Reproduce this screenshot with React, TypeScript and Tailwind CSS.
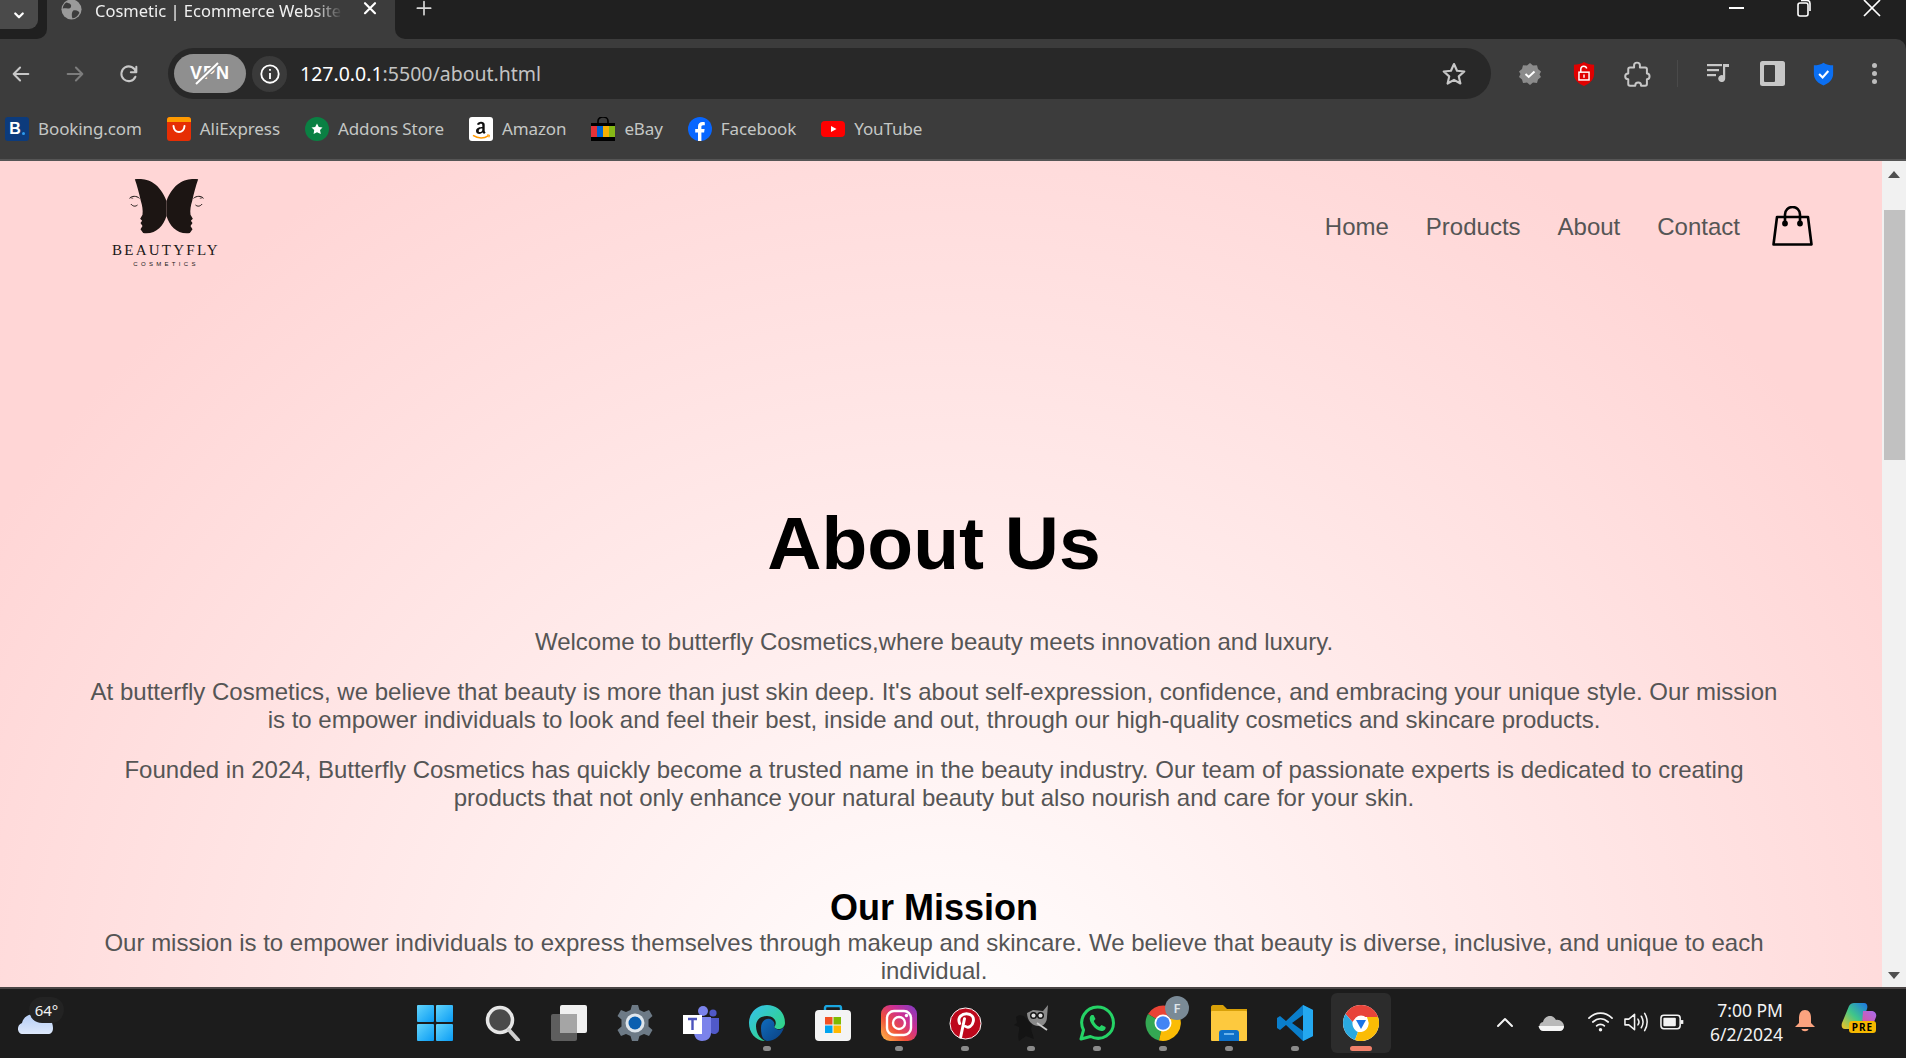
import React from "react";

const ui = "font-['Noto_Sans','Open_Sans',sans-serif]";

function Butterfly() {
  const half = (
    <>
      <path d="M133 40 C165 36 205 45 228 105 L228 150 C218 182 195 206 158 201 L150 190 L156 180 L150 171 L155 164 L149 158 L156 146 C158 132 155 118 151 105 C146 82 140 60 133 40 Z" fill="#1c1513" />
      <path d="M117 97 C124 89 138 89 147 97" stroke="#1c1513" strokeWidth="3" fill="none" />
      <path d="M119 95 L128 97" stroke="#1c1513" strokeWidth="2" fill="none" />
      <path d="M121 114 C128 122 135 122 141 117" stroke="#1c1513" strokeWidth="3" fill="none" />
    </>
  );
  return (
    <svg viewBox="110 30 236 180" className="w-[79px] h-[60px]">
      {half}
      <g transform="translate(456 0) scale(-1 1)">{half}</g>
    </svg>
  );
}

function Bag() {
  return (
    <svg viewBox="0 0 41 40" className="w-[41px] h-[40px]" fill="none" stroke="#000" strokeWidth="2.6" strokeLinejoin="round">
      <path d="M5 11 H36 L39.5 38.5 H1.5 Z" />
      <path d="M13 17 V8.5 a7.5 7.5 0 0 1 15 0 V17" />
      <circle cx="13" cy="17.5" r="1.6" fill="#000" />
      <circle cx="28" cy="17.5" r="1.6" fill="#000" />
    </svg>
  );
}

function Booking() {
  return (
    <div className="w-6 h-6 rounded-[3px] bg-[#0c3b7c] flex items-center justify-center gap-[1px]">
      <span className="text-white font-bold text-[16px] leading-none font-['Liberation_Sans',sans-serif]">B</span>
      <span className="w-[3px] h-[3px] rounded-full bg-[#2d9cf0] mt-[9px]" />
    </div>
  );
}
function Ali() {
  return (
    <svg viewBox="0 0 24 24" className="w-6 h-6">
      <rect width="24" height="24" rx="3" fill="#e62e04" />
      <path d="M0 3 a3 3 0 0 1 3 -3 H21 a3 3 0 0 1 3 3 V5 H0 Z" fill="#ff9a00" />
      <path d="M6.5 9 C7 17 17 17 17.5 9" stroke="#fff" strokeWidth="2" fill="none" strokeLinecap="round" />
    </svg>
  );
}
function Addons() {
  return (
    <svg viewBox="0 0 24 24" className="w-6 h-6">
      <circle cx="12" cy="12" r="12" fill="#0a8043" />
      <path d="M12 6.5 L13.8 10 L17.5 10.4 L15 13 L15.8 17 L12 15.2 L8.6 17 L9.2 13 L6.5 10.4 L10.2 10 Z" fill="#fff" />
    </svg>
  );
}
function Amazon() {
  return (
    <svg viewBox="0 0 24 24" className="w-6 h-6">
      <rect width="24" height="24" rx="3" fill="#fff" />
      <path d="M8 7.5 C8.5 4 15.5 3.6 15.7 7.5 V13.5 C15.7 14.6 16.2 15 16.7 15.5 L15 17 L13.6 15.6 C11 18 7 17 7 14 C7 10.5 11 10 13.3 10 V8 C13.3 6.2 10.6 6.2 10.2 8 Z M13.3 11.6 C11.5 11.6 9.7 12.2 9.7 13.9 C9.7 15.6 12.6 15.6 13.3 13.2 Z" fill="#111" />
      <path d="M4 18.4 C9 21.6 15 21.6 19.6 18.6" stroke="#f90" strokeWidth="1.5" fill="none" />
      <path d="M18 18 L20.4 18 L20 20.4" stroke="#f90" strokeWidth="1" fill="none" />
    </svg>
  );
}
function Ebay() {
  return (
    <svg viewBox="0 0 24 24" className="w-6 h-6">
      <path d="M7 7 V4 a5 4 0 0 1 10 0 V7" stroke="#000" strokeWidth="1.6" fill="none" />
      <rect x="0" y="6" width="24" height="18" fill="#000" />
      <rect x="0" y="9" width="6" height="11" fill="#e53238" />
      <rect x="6" y="9" width="6" height="11" fill="#0064d2" />
      <rect x="12" y="9" width="6" height="11" fill="#f5af02" />
      <rect x="18" y="9" width="6" height="11" fill="#86b817" />
    </svg>
  );
}
function Facebook() {
  return (
    <svg viewBox="0 0 24 24" className="w-6 h-6">
      <circle cx="12" cy="12" r="12" fill="#0866ff" />
      <path d="M10 24 V15.5 H7.2 V12 H10 V9.5 C10 6.5 11.8 5 14.4 5 C15.6 5 16.6 5.2 16.8 5.2 V8.2 H15.1 C13.7 8.2 13.4 9 13.4 10 V12 H16.6 L16.1 15.5 H13.4 V24 Z" fill="#fff" />
    </svg>
  );
}
function Youtube() {
  return (
    <svg viewBox="0 0 24 24" className="w-6 h-6">
      <rect x="0" y="4" width="24" height="16" rx="4" fill="#f00" />
      <path d="M10 9 L15.5 12 L10 15 Z" fill="#fff" />
    </svg>
  );
}

const bookmarks: [React.ReactNode, string][] = [
  [<Booking />, "Booking.com"],
  [<Ali />, "AliExpress"],
  [<Addons />, "Addons Store"],
  [<Amazon />, "Amazon"],
  [<Ebay />, "eBay"],
  [<Facebook />, "Facebook"],
  [<Youtube />, "YouTube"],
];

function Stroke({ w = 24, d, color = "#c7c7c7", sw = 2, fill = "none" }: { w?: number; d: string; color?: string; sw?: number; fill?: string }) {
  return (
    <svg viewBox="0 0 24 24" style={{ width: w, height: w }} fill={fill} stroke={color} strokeWidth={sw} strokeLinecap="round" strokeLinejoin="round">
      <path d={d} />
    </svg>
  );
}

function TabStrip() {
  return (
    <div className="h-[39px] bg-[#3c3c3c] flex items-start shrink-0 overflow-hidden text-white">
      <div className="w-[47px] h-[39px] bg-[#202020] rounded-br-[10px]">
        <div className="w-[38px] h-[29px] bg-[#4a4a4a] rounded-br-[9px] flex items-center justify-center">
          <Stroke w={18} d="M7 10 L12 15 L17 10" color="#fff" sw={3} />
        </div>
      </div>
      <div className="w-[348px] h-[39px] flex items-start pl-[14px]">
        <svg viewBox="0 0 24 24" className="w-[21px] h-[21px] -mt-[1px] shrink-0">
          <circle cx="12" cy="12" r="11.5" fill="#9a9a9a" />
          <path d="M6 4 C10 5 13 6 11 10 C8 12 5 10 2 11 C2 8 4 5 6 4 Z M14 13 C18 12 21 14 21 16 C19 20 16 22 13 22 C12 19 12 15 14 13 Z" fill="#3c3c3c" />
        </svg>
        <span className={`${ui} ml-[13px] text-[16.5px] leading-[22px] w-[248px] overflow-hidden whitespace-nowrap text-[#f0f0f0] [mask-image:linear-gradient(90deg,#000_88%,transparent_100%)]`}>
          Cosmetic | Ecommerce Website
        </span>
        <div className="ml-[17px] -mt-[1px]">
          <Stroke w={20} d="M6 5 L18 17 M18 5 L6 17" color="#fff" sw={2.6} />
        </div>
      </div>
      <div className="flex-1 h-[39px] bg-[#202020] rounded-bl-[10px] flex items-start pl-[19px] pr-[24px]">
        <div className="-mt-[1px]">
          <Stroke w={20} d="M12 3 V19 M4 11 H20" color="#d8d8d8" sw={2} />
        </div>
        <div className="ml-auto flex items-start -mt-[2px]">
          <svg viewBox="0 0 20 20" className="w-5 h-5"><path d="M3 10 H18" stroke="#fff" strokeWidth="2" /></svg>
          <svg viewBox="0 0 20 20" className="w-5 h-5 ml-[48px]" fill="none" stroke="#fff" strokeWidth="1.6"><rect x="4" y="5" width="10" height="13" rx="2" /><path d="M7 2.5 H13 a3 3 0 0 1 3 3 V13" /></svg>
          <svg viewBox="0 0 20 20" className="w-5 h-5 ml-[48px]" fill="none" stroke="#fff" strokeWidth="1.7"><path d="M2 2 L18 18 M18 2 L2 18" /></svg>
        </div>
      </div>
    </div>
  );
}

function Toolbar() {
  return (
    <div className="h-[69px] flex items-center shrink-0">
      <div className="ml-[10px]"><Stroke w={22} d="M20 12 H4 M11 5 L4 12 L11 19" color="#c7c7c7" sw={2.2} /></div>
      <div className="ml-[32px]"><Stroke w={22} d="M4 12 H20 M13 5 L20 12 L13 19" color="#7d7d7d" sw={2.2} /></div>
      <div className="ml-[32px]"><Stroke w={22} d="M19.5 10 A8 8 0 1 0 19 15 M20 4 V10 H14" color="#c7c7c7" sw={2.2} /></div>
      <div className="ml-[28px] w-[1323px] h-[51px] rounded-full bg-[#282828] flex items-center pl-[6px]">
        <div className="w-[72px] h-[39px] rounded-full bg-[#8f8f8f] relative flex items-center justify-center">
          <span className="font-['Liberation_Sans',sans-serif] font-bold text-[18px] text-white tracking-[1px]">VPN</span>
          <svg viewBox="0 0 40 24" className="absolute left-[16px] top-[8px] w-[40px] h-[24px]">
            <path d="M6 22 L28 1" stroke="#8f8f8f" strokeWidth="5" />
            <path d="M6 22 L28 1" stroke="#fff" strokeWidth="2" />
          </svg>
        </div>
        <div className="ml-[6px] w-[35px] h-[36px] rounded-full bg-[#3a3a3a] flex items-center justify-center">
          <svg viewBox="0 0 24 24" className="w-[22px] h-[22px]" fill="none" stroke="#fff" strokeWidth="2"><circle cx="12" cy="12" r="9.5" /><path d="M12 11 V17.5 M12 6.5 V8.5" /></svg>
        </div>
        <span className={`${ui} ml-[13px] text-[19.5px] text-[#c3c3c3]`}><span className="text-white">127.0.0.1</span>:5500/about.html</span>
        <div className="ml-auto mr-[24px]">
          <Stroke w={26} d="M12 2.8 L14.8 9 L21.5 9.7 L16.4 14.2 L17.9 20.8 L12 17.4 L6.1 20.8 L7.6 14.2 L2.5 9.7 L9.2 9 Z" color="#c7c7c7" sw={2} />
        </div>
      </div>
      <svg viewBox="0 0 24 24" className="w-6 h-6 ml-[27px]">
        <path d="M12 1 L15 3.5 L19 3.3 L20 7 L23 9.5 L21.5 12.5 L23 15 L20 17.5 L19 21 L15 20.5 L12 23 L9 20.5 L5 21 L4 17.5 L1 15 L2.5 12 L1 9.5 L4 7 L5 3.3 L9 3.5 Z" fill="#8b8b8b" />
        <path d="M7.5 12 L10.7 15 L16.5 9.5" stroke="#fff" strokeWidth="2" fill="none" />
      </svg>
      <svg viewBox="0 0 24 26" className="w-[22px] h-[24px] ml-[31px]">
        <path d="M12 0 C15 2 19 3 23 3 V13 C23 19 18 24 12 26 C6 24 1 19 1 13 V3 C5 3 9 2 12 0 Z" fill="#e00000" />
        <rect x="6.5" y="11" width="11" height="8.5" fill="none" stroke="#fff" strokeWidth="1.6" />
        <path d="M8.5 11 V7.5 a3.3 3.3 0 0 1 6.5 -0.5" stroke="#fff" strokeWidth="1.6" fill="none" />
        <path d="M12 13.5 V17" stroke="#fff" strokeWidth="1.6" />
      </svg>
      <div className="ml-[28px]">
        <Stroke w={28} d="M9.5 4.5 C9.5 1.5 14.5 1.5 14.5 4.5 V6.5 H19 C20 6.5 20.5 7 20.5 8 V11.5 C23.5 11.5 23.5 16.5 20.5 16.5 V20.5 C20.5 21.5 20 22 19 22 H15.5 C15.5 18.5 10.5 18.5 10.5 22 H6 C5 22 4.5 21.5 4.5 20.5 V16.5 C1 16.5 1 11.5 4.5 11.5 V8 C4.5 7 5 6.5 6 6.5 H9.5 Z" color="#c7c7c7" sw={1.7} />
      </div>
      <div className="ml-[26px] w-[1px] h-[27px] bg-[#4a4a4a]" />
      <svg viewBox="0 0 24 20" className="w-6 h-[20px] ml-[28px] -mt-[3px]" fill="#c7c7c7">
        <rect x="1" y="2" width="15" height="2.2" />
        <rect x="1" y="7" width="12" height="2.2" />
        <rect x="1" y="12" width="9" height="2.2" />
        <path d="M17 2 H23 V5 H19.2 V16.5 A3.5 3.5 0 1 1 17 13.3 Z" />
      </svg>
      <svg viewBox="0 0 25 25" className="w-[25px] h-[25px] ml-[30px]">
        <rect x="0" y="0" width="25" height="25" rx="2.5" fill="#c7c7c7" />
        <rect x="4" y="4" width="11" height="17" rx="1" fill="#3c3c3c" />
      </svg>
      <svg viewBox="0 0 24 26" className="w-[21px] h-[24px] ml-[28px]">
        <path d="M12 0 C15 2 19 3 23 3 V13 C23 19 18 24 12 26 C6 24 1 19 1 13 V3 C5 3 9 2 12 0 Z" fill="#0b6ff2" />
        <path d="M7 13 L11 17 L17.5 9.5" stroke="#fff" strokeWidth="2.4" fill="none" />
      </svg>
      <div className="ml-[38px] flex flex-col gap-[3px]">
        <span className="w-[5px] h-[5px] rounded-full bg-[#bdbdbd]" />
        <span className="w-[5px] h-[5px] rounded-full bg-[#bdbdbd]" />
        <span className="w-[5px] h-[5px] rounded-full bg-[#bdbdbd]" />
      </div>
    </div>
  );
}

function Bookmarks() {
  return (
    <div className="h-[51px] flex items-start gap-[25px] pl-[5px] pt-[9px] shrink-0">
      {bookmarks.map(([icon, label]) => (
        <div key={label} className="flex items-center gap-[9px] h-[24px]">
          {icon}
          <span className={`${ui} text-[17px] text-[#c4c7c5] whitespace-nowrap tracking-[-0.1px]`}>{label}</span>
        </div>
      ))}
    </div>
  );
}

function Page() {
  return (
    <main className="flex-1 overflow-hidden bg-[radial-gradient(ellipse_1100px_1050px_at_941px_900px,#ffffff_0%,#ffd6d6_100%)]">
      <div className="w-[1868px] font-['Liberation_Sans',Arial,sans-serif]">
        <nav className="flex items-start justify-between pl-[109px] pr-[55px]">
          <div className="pt-[15px] w-[114px] flex flex-col items-center">
            <Butterfly />
            <div className="mt-[6px] font-['Liberation_Serif',serif] text-[15px] leading-[17px] tracking-[2.25px] text-[#201816] whitespace-nowrap">BEAUTYFLY</div>
            <div className="mt-[1px] font-['Liberation_Sans',sans-serif] text-[6px] leading-[8px] tracking-[3.3px] text-[#201816] whitespace-nowrap">COSMETICS</div>
          </div>
          <div className="flex items-start pt-[45px]">
            <ul className="flex gap-[37px] text-[24px] leading-[42px] text-[#555] mr-[32px]">
              <li>Home</li>
              <li>Products</li>
              <li>About</li>
              <li>Contact</li>
            </ul>
            <Bag />
          </div>
        </nav>
        <section className="px-[84px] text-center text-[24px] leading-[28px] text-[#555]">
          <h1 className="mt-[230px] text-[75px] leading-[90px] font-bold text-black">About Us</h1>
          <p className="mt-[40px]">Welcome to butterfly Cosmetics,where beauty meets innovation and luxury.</p>
          <p className="mt-[22px]">At butterfly Cosmetics, we believe that beauty is more than just skin deep. It's about self-expression, confidence, and embracing your unique style. Our mission is to empower individuals to look and feel their best, inside and out, through our high-quality cosmetics and skincare products.</p>
          <p className="mt-[22px]">Founded in 2024, Butterfly Cosmetics has quickly become a trusted name in the beauty industry. Our team of passionate experts is dedicated to creating products that not only enhance your natural beauty but also nourish and care for your skin.</p>
          <h2 className="mt-[74px] text-[36px] leading-[43px] font-bold text-black">Our Mission</h2>
          <p>Our mission is to empower individuals to express themselves through makeup and skincare. We believe that beauty is diverse, inclusive, and unique to each individual.</p>
        </section>
      </div>
    </main>
  );
}

function Scrollbar() {
  return (
    <aside className="w-[24px] bg-[#f1f1f1] flex flex-col items-center shrink-0">
      <svg viewBox="0 0 12 7" className="w-[12px] h-[7px] mt-[10px]"><path d="M6 0 L12 7 H0 Z" fill="#505050" /></svg>
      <div className="w-[21px] h-[250px] bg-[#c1c1c1] mt-[32px] ml-[1px]" />
      <svg viewBox="0 0 12 7" className="w-[12px] h-[7px] mt-auto mb-[8px]"><path d="M6 7 L12 0 H0 Z" fill="#505050" /></svg>
    </aside>
  );
}

function Cell({ children, dot, active }: { children: React.ReactNode; dot?: boolean; active?: boolean }) {
  return (
    <div className="w-[66px] h-[66px] flex flex-col items-center relative pt-[15px]">
      {active && <span className="absolute left-[3px] top-[4px] w-[60px] h-[60px] rounded-[6px] bg-[#2c2c2c]" />}
      <div className="relative w-[38px] h-[38px] flex items-center justify-center">{children}</div>
      {dot && <span className={`absolute bottom-[4px] h-[5px] rounded-full ${active ? "w-[22px] bg-[#f0806a]" : "w-[8px] bg-[#8b8b8b]"}`} />}
    </div>
  );
}

function Taskbar() {
  return (
    <div className="h-[71px] bg-[#1c1c1c] border-t-[2px] border-[#4a4545] flex items-start shrink-0 text-white relative">
      <div className="relative w-[402px] h-full shrink-0">
        <svg viewBox="0 0 36 26" className="absolute left-[17px] top-[19px] w-[36px] h-[26px]">
          <defs><linearGradient id="cl" x1="0" y1="0" x2="0" y2="1"><stop offset="0" stopColor="#b5cdf5" /><stop offset="1" stopColor="#dde8fb" /></linearGradient></defs>
          <path d="M6 26 C0 26 -1 17 5 15 C7 6 18 3 24 10 C30 8 36 12 36 20 C36 24 34 26 31 26 Z" fill="url(#cl)" />
        </svg>
        <div className={`${ui} absolute left-[29px] top-[8px] h-[26px] w-[35px] rounded-[13px] bg-[#232323] text-[15px] leading-[26px] text-center text-[#f3f3f3]`}>64°</div>
      </div>
      <div className="flex items-start">
        <Cell>
          <svg viewBox="0 0 36 36" className="w-[36px] h-[36px]">
            <defs><linearGradient id="w" x1="0" y1="0" x2="1" y2="1"><stop offset="0" stopColor="#62d4fb" /><stop offset="1" stopColor="#0a9cf5" /></linearGradient></defs>
            <rect x="0" y="0" width="17" height="17" rx="1" fill="url(#w)" /><rect x="19" y="0" width="17" height="17" rx="1" fill="url(#w)" />
            <rect x="0" y="19" width="17" height="17" rx="1" fill="url(#w)" /><rect x="19" y="19" width="17" height="17" rx="1" fill="url(#w)" />
          </svg>
        </Cell>
        <div className="w-[2px]" />
        <Cell>
          <svg viewBox="0 0 36 36" className="w-[36px] h-[36px]">
            <circle cx="15" cy="15" r="12.5" fill="#4a4a4a" stroke="#e6e6e6" strokeWidth="3.5" />
            <path d="M24 25 L33 35" stroke="#cfcfcf" strokeWidth="4" strokeLinecap="round" />
          </svg>
        </Cell>
        <Cell>
          <svg viewBox="0 0 36 36" className="w-[36px] h-[36px]">
            <rect x="0" y="9" width="26" height="27" rx="2" fill="#5e5e5e" />
            <rect x="9" y="0" width="27" height="28" rx="2" fill="#f0f0f0" />
            <rect x="9" y="9" width="17" height="19" fill="#a5a5a5" />
          </svg>
        </Cell>
        <Cell>
          <svg viewBox="0 0 36 36" className="w-[36px] h-[36px]">
            <path d="M15 0 H21 L22.5 5 L27 7 L32 5 L35.5 11 L31.5 14.5 V21.5 L35.5 25 L32 31 L27 29 L22.5 31 L21 36 H15 L13.5 31 L9 29 L4 31 L0.5 25 L4.5 21.5 V14.5 L0.5 11 L4 5 L9 7 L13.5 5 Z" fill="#6d7a86" />
            <circle cx="18" cy="18" r="9.5" fill="#dfe6ec" />
            <circle cx="18" cy="18" r="6.5" fill="#0a5fb0" />
          </svg>
        </Cell>
        <Cell>
          <svg viewBox="0 0 36 36" className="w-[36px] h-[36px]">
            <circle cx="20" cy="6" r="5" fill="#7b83eb" /><circle cx="30" cy="8" r="3.6" fill="#5059c9" />
            <path d="M25 13 H36 V24 C36 29 31 30 28 28 Z" fill="#5059c9" />
            <path d="M11 12 H28 V28 C28 33 24 36 19 36 C14 36 11 32 11 27 Z" fill="#7b83eb" />
            <rect x="0" y="10" width="19" height="19" fill="#fff" />
            <path d="M5 14 H14 M9.5 14 V25" stroke="#4b53bc" strokeWidth="2.4" />
          </svg>
        </Cell>
        <Cell dot>
          <svg viewBox="0 0 36 36" className="w-[36px] h-[36px]">
            <defs>
              <linearGradient id="e1" x1="0" y1="0" x2="1" y2="1"><stop offset="0" stopColor="#35c1f1" /><stop offset="1" stopColor="#2fd96a" /></linearGradient>
              <linearGradient id="e2" x1="0" y1="0" x2="1" y2="1"><stop offset="0" stopColor="#0f6cbd" /><stop offset="1" stopColor="#0b3f80" /></linearGradient>
            </defs>
            <path d="M18 0 C28 0 36 7 36 18 C36 24 28 26 25 22 C29 18 26 11 18 11 C9 11 5 18 8 27 C9 31 12 34 16 36 C7 36 0 28 0 18 C0 8 8 0 18 0 Z" fill="url(#e1)" />
            <path d="M12 23 C12 15 19 12 23 15 C27 18 25 22 25 22 C28 26 33 25 35 22 C33 30 26 36 18 36 C13 35 12 29 12 23 Z" fill="url(#e2)" />
          </svg>
        </Cell>
        <Cell>
          <svg viewBox="0 0 36 36" className="w-[36px] h-[36px]">
            <path d="M10 7 V3 C10 2 11 1 12 1 H24 C25 1 26 2 26 3 V7" stroke="#1aa6e0" strokeWidth="2.4" fill="none" />
            <rect x="0" y="5" width="36" height="31" rx="4" fill="#f4f4f4" />
            <rect x="10" y="12" width="7.5" height="7.5" fill="#f25022" /><rect x="18.5" y="12" width="7.5" height="7.5" fill="#7fba00" />
            <rect x="10" y="20.5" width="7.5" height="7.5" fill="#00a4ef" /><rect x="18.5" y="20.5" width="7.5" height="7.5" fill="#ffb900" />
          </svg>
        </Cell>
        <Cell dot>
          <svg viewBox="0 0 36 36" className="w-[36px] h-[36px]">
            <defs><linearGradient id="ig" x1="0" y1="1" x2="1" y2="0"><stop offset="0" stopColor="#fdc14a" /><stop offset="0.35" stopColor="#f0503a" /><stop offset="0.65" stopColor="#cc2f93" /><stop offset="1" stopColor="#7a3cc8" /></linearGradient></defs>
            <rect width="36" height="36" rx="9" fill="url(#ig)" />
            <rect x="6" y="6" width="24" height="24" rx="7" fill="none" stroke="#fff" strokeWidth="2.4" />
            <circle cx="18" cy="18" r="6" fill="none" stroke="#fff" strokeWidth="2.4" />
            <circle cx="25.5" cy="10.5" r="1.7" fill="#fff" />
          </svg>
        </Cell>
        <Cell dot>
          <svg viewBox="0 0 34 34" className="w-[33px] h-[33px]">
            <circle cx="17" cy="17" r="16" fill="#bd081c" stroke="#fff" strokeWidth="1" />
            <path d="M11 17 C8 10 14 7 18 7 C23 7 26 10 25 15 C24 20 20 22 17 20 M16 12 L12 31" stroke="#fff" strokeWidth="3" fill="none" strokeLinecap="round" />
          </svg>
        </Cell>
        <Cell dot>
          <svg viewBox="0 0 36 36" className="w-[36px] h-[36px]">
            <path d="M3 12 C8 8 13 12 15 16 C18 18 20 20 18 24 L21 34 L13 31 L6 36 C4 30 7 26 6 22 L1 20 L4 18 Z" fill="#141414" />
            <path d="M14 8 L20 5 L30 6 L35 0 L34 12 C34 18 30 22 25 21 C20 21 14 16 14 8 Z" fill="#8a8a8a" />
            <circle cx="20.5" cy="10.5" r="2.8" fill="#e4e4e4" stroke="#111" strokeWidth="1.4" />
            <circle cx="27.5" cy="10.5" r="2.8" fill="#e4e4e4" stroke="#111" strokeWidth="1.4" />
            <path d="M24 18 L34 25" stroke="#c9c9c9" strokeWidth="1.8" />
          </svg>
        </Cell>
        <Cell dot>
          <svg viewBox="0 0 36 36" className="w-[36px] h-[36px]">
            <path d="M2 34 L4.5 25 C-1 14 7 2 18.5 2 C28 2 34.5 9.5 34.5 18 C34.5 29 23 37 11.5 31.5 Z" fill="none" stroke="#25d366" strokeWidth="3" strokeLinejoin="round" />
            <path d="M12.5 10 C10 12 10 15 13 19.5 C16 24 20 26.5 23.5 26 C26 25.5 27 23.5 26.5 22 L22.5 20 L20.5 22 C18 21 15.5 18.5 14.8 16 L16.5 14 L14.5 10 Z" fill="#25d366" />
          </svg>
        </Cell>
        <Cell dot>
          <div className="relative w-[36px] h-[36px]">
            <svg viewBox="0 0 36 36" className="w-[36px] h-[36px]">
              <path d="M18 18 L3 9 A18 18 0 0 1 33.5 9 Z" fill="#ea4335" />
              <path d="M18 18 L3 9 A18 18 0 0 0 14 35.5 Z" fill="#34a853" />
              <path d="M18 18 L33.5 9 A18 18 0 0 1 14 35.5 Z" fill="#fbbc05" />
              <circle cx="18" cy="18" r="8.5" fill="#fff" />
              <circle cx="18" cy="18" r="6.8" fill="#4285f4" />
            </svg>
            <div className={`${ui} absolute -right-[8px] -top-[9px] w-[24px] h-[24px] rounded-full bg-[#7a8a96] text-[13px] leading-[24px] text-center text-[#dfe5ea] font-semibold`}>F</div>
          </div>
        </Cell>
        <Cell dot>
          <svg viewBox="0 0 36 36" className="w-[36px] h-[36px]">
            <path d="M0 2 C0 1 1 0 2 0 H12 L16 4 H36 V14 H0 Z" fill="#d8a008" />
            <rect x="0" y="6" width="36" height="30" rx="1" fill="#fdc93e" />
            <path d="M8 36 V28 C8 26 9 25 11 25 H25 C27 25 28 26 28 28 V36 Z" fill="#0e70c8" />
            <rect x="13" y="28" width="10" height="2" fill="#6cb4ec" />
          </svg>
        </Cell>
        <Cell dot>
          <svg viewBox="0 0 36 36" className="w-[36px] h-[36px]">
            <path d="M26 0 L36 5 V31 L26 36 L9 20 L3 25 L0 23 V13 L3 11 L9 16 Z M26 10 L15 18 L26 26 Z" fill="#0a7ecb" fillRule="evenodd" />
            <path d="M26 0 L36 5 V31 L26 36 Z" fill="#24a8f0" />
          </svg>
        </Cell>
        <Cell dot active>
          <svg viewBox="0 0 36 36" className="w-[36px] h-[36px]">
            <circle cx="18" cy="18" r="18" fill="#fff" />
            <path d="M18 0 A18 18 0 0 1 35 12 L18 12 C14 12 11 14 9.5 17 L2.5 9 A18 18 0 0 1 18 0 Z" fill="#e8443a" />
            <path d="M2.5 9 L9.5 17 C9 22 12 26 15 27 L12 35 A18 18 0 0 1 2.5 9 Z" fill="#2aa9e0" />
            <path d="M35 12 A18 18 0 0 1 12 35 L15 27 C22 28 27 22 25 16 L24 12 Z" fill="#fbbc05" />
            <circle cx="18" cy="18" r="7.5" fill="#fff" />
            <path d="M18 24 L13 15 H23 Z" fill="#1a73e8" />
          </svg>
        </Cell>
      </div>
      <div className="ml-auto flex items-start h-full relative">
        <div className="flex items-center h-[68px] pb-[2px] mr-[3px]">
          <Stroke w={24} d="M5 16 L12 9 L19 16" color="#f3f3f3" sw={2} />
          <svg viewBox="0 0 26 17" className="w-[26px] h-[17px] ml-[21px]">
            <path d="M6 16 C0 16 0 9 5 8 C7 1 15 0 18 6 C22 5 26 9 26 12 C26 15 24 16 22 16 Z" fill="#b9b9b9" />
            <path d="M0.5 12 L26 12 C26 15 24 17 22 17 H5 C3 17 1 15 0.5 12 Z" fill="#f5f5f5" />
          </svg>
          <svg viewBox="0 0 26 22" className="w-[25px] h-[22px] ml-[24px]" fill="none" stroke="#f3f3f3" strokeWidth="1.8" strokeLinecap="round">
            <path d="M1 7 C8 0 18 0 25 7" /><path d="M5 11 C10 6.5 16 6.5 21 11" /><path d="M9 15 C11 13 15 13 17 15" />
            <circle cx="13" cy="19" r="1.8" fill="#f3f3f3" stroke="none" />
          </svg>
          <svg viewBox="0 0 25 22" className="w-[24px] h-[22px] ml-[11px]" fill="none" stroke="#f3f3f3" strokeWidth="1.6" strokeLinecap="round" strokeLinejoin="round">
            <path d="M1 8 H5 L11 3 V19 L5 14 H1 Z" /><path d="M14.5 8 C16 10 16 12 14.5 14" /><path d="M18 5 C20.5 9 20.5 13 18 17" /><path d="M21.5 2 C25 8 25 14 21.5 20" />
          </svg>
          <svg viewBox="0 0 25 16" className="w-[24px] h-[16px] ml-[12px]" fill="none" stroke="#f3f3f3" strokeWidth="1.6">
            <rect x="1" y="1" width="20" height="14" rx="3" /><rect x="3.5" y="3.5" width="13" height="9" rx="1" fill="#f3f3f3" stroke="none" /><path d="M23 6 V10" strokeWidth="2.6" />
          </svg>
        </div>
        <div className={`${ui} mt-[9px] w-[96px] mr-[12px] text-right text-[17.5px] leading-[24px] text-[#f3f3f3]`}>
          <div>7:00 PM</div>
          <div>6/2/2024</div>
        </div>
        <svg viewBox="0 0 20 22" className="w-[20px] h-[22px] mt-[21px]">
          <path d="M10 0 C14 0 16 3 16 8 V13 L20 17 H0 L4 13 V8 C4 3 6 0 10 0 Z" fill="#fba37f" />
          <path d="M6.5 19 H13.5 C13 22 7 22 6.5 19 Z" fill="#fba37f" />
        </svg>
        <div className="relative w-[36px] h-[36px] ml-[26px] mr-[29px] mt-[14px]">
          <svg viewBox="0 0 36 30" className="w-[36px] h-[30px]">
            <defs>
              <linearGradient id="c1" x1="0" y1="1" x2="1" y2="0"><stop offset="0" stopColor="#f9c520" /><stop offset="0.5" stopColor="#3fc68a" /><stop offset="1" stopColor="#1b74e8" /></linearGradient>
              <linearGradient id="c2" x1="0" y1="1" x2="1" y2="0"><stop offset="0" stopColor="#f5476f" /><stop offset="1" stopColor="#a86cf0" /></linearGradient>
            </defs>
            <path d="M8 3 C9 1 11 0 13 0 H23 C26 0 27 3 26 6 L20 22 C19 25 17 26 15 26 H4 C1 26 0 23 1 20 Z" fill="url(#c1)" />
            <path d="M22 8 H30 C34 8 36 11 35 14 L31 24 C30 27 28 28 25 28 H14 C18 28 20 25 21 22 Z" fill="url(#c2)" />
          </svg>
          <div className={`${ui} absolute left-[8px] top-[18px] w-[27px] h-[12px] rounded-[3px] bg-[#f5b800] text-[10px] leading-[12px] text-center text-black font-bold tracking-[1px]`}>PRE</div>
        </div>
      </div>
    </div>
  );
}

export default function App() {
  return (
    <div className="w-[1906px] h-[1058px] flex flex-col overflow-hidden bg-[#202020]">
      <TabStrip />
      <div className="bg-[#3c3c3c] rounded-tr-[10px] shrink-0">
        <Toolbar />
        <Bookmarks />
      </div>
      <div className="h-[2px] bg-[#555] shrink-0" />
      <div className="flex h-[826px] shrink-0">
        <Page />
        <Scrollbar />
      </div>
      <Taskbar />
    </div>
  );
}
